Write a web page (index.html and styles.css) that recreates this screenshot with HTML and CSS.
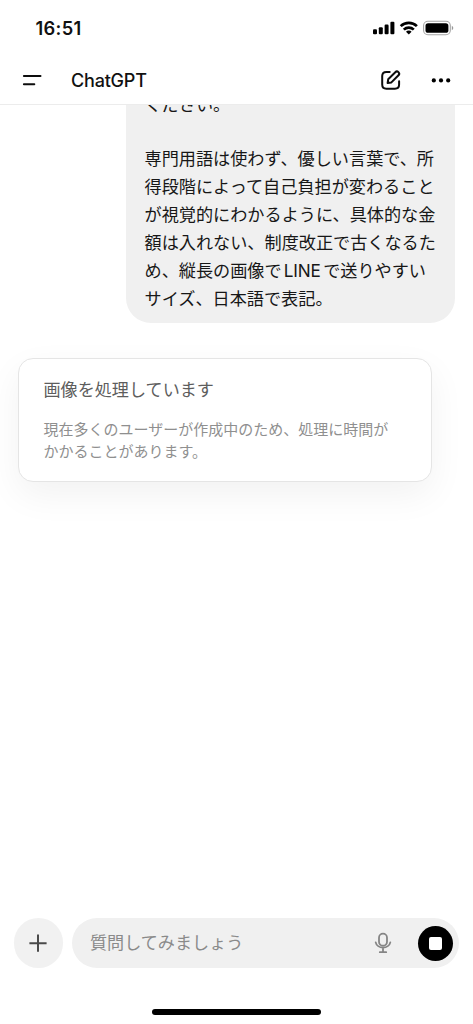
FILE: index.html
```html
<!DOCTYPE html>
<html lang="ja">
<head>
<meta charset="utf-8">
<title>ChatGPT</title>
<link rel="stylesheet" href="styles.css">
</head>
<body>
<div class="app">
  <div class="status">
    <span class="time">16:51</span>
    <svg class="status-icons" width="82" height="16" viewBox="0 0 82 16">
      <rect x="0" y="9.3" width="4" height="5" rx="1.1"/>
      <rect x="5.8" y="7.2" width="4" height="7.1" rx="1.1"/>
      <rect x="11.6" y="4.6" width="4" height="9.7" rx="1.1"/>
      <rect x="17.4" y="1.7" width="4" height="12.6" rx="1.1"/>
      <g fill="none" stroke="#000" stroke-width="2.7">
        <path d="M27.7 6.1a11.6 11.6 0 0 1 16.2 0"/>
        <path d="M30.8 9.6a7.2 7.2 0 0 1 10 0"/>
      </g>
      <path d="M33 11.7a3.9 3.9 0 0 1 5.6 0l-2.8 2.9z"/>
      <rect x="50.6" y="1.3" width="26.7" height="13.4" rx="4.3" fill="none" stroke="#a5a5a5" stroke-width="1.1"/>
      <rect x="52.5" y="3.2" width="22.9" height="9.6" rx="2.6"/>
      <path d="M78.8 5.8c2 .8 2 3.6 0 4.4z" fill="#999"/>
    </svg>
  </div>
  <header class="header">
    <svg class="menu" width="20" height="12" viewBox="0 0 20 12"><path d="M1.9 1.9h16.6M1.9 10.3h10.4"/></svg>
    <h1>ChatGPT</h1>
    <svg class="compose" width="22" height="22" viewBox="0 0 22 22"><path d="M9.7 2.9H6.4Q2.2 2.9 2.2 7.1v8.4Q2.2 19.7 6.4 19.7h8.5Q19.1 19.7 19.1 15.5v-3.3"/><path d="M7.6 14.1l.6-3.8 7.1-7.1a2.2 2.2 0 0 1 3.2 3.1l-7.1 7.1z"/></svg>
    <svg class="more" width="20" height="6" viewBox="0 0 20 6"><circle cx="2.8" cy="3.4" r="2.1"/><circle cx="10" cy="3.4" r="2.1"/><circle cx="17.2" cy="3.4" r="2.1"/></svg>
  </header>
  <main class="chat">
    <div class="bubble">
      <p>ください。</p>
      <p class="request">専門用語は使わず、優しい言葉で、所<br>得段階によって自己負担が変わること<br>が視覚的にわかるように、具体的な金<br>額は入れない、制度改正で古くなるた<br>め、縦長の画像で<span class="latin">LINE</span>で送りやすい<br>サイズ、日本語で表記。</p>
    </div>
    <section class="card">
      <h2>画像を処理しています</h2>
      <p>現在多くのユーザーが作成中のため、処理に時間が<br>かかることがあります。</p>
    </section>
  </main>
  <footer class="composer">
    <div class="add"><svg width="18" height="18" viewBox="0 0 18 18"><path d="M9 .6v17.2M.4 9.2h17.2"/></svg></div>
    <div class="field">
      <span class="placeholder">質問してみましょう</span>
      <svg class="mic" width="18" height="22" viewBox="0 0 18 22"><rect x="5" y="1.7" width="8" height="12" rx="4"/><path d="M1.7 10.3a7.4 6.2 0 0 0 14.6 0M9 16v4M5.8 20.2h6.4"/></svg>
      <div class="stop"><i></i></div>
    </div>
  </footer>
  <div class="home"></div>
</div>
</body>
</html>
```
FILE: styles.css
```css
* { box-sizing: border-box; margin: 0; padding: 0; }
body { background: #fff; color: #171717; font-family: Inter, "Noto Sans CJK JP", sans-serif; }
.app { display: flex; flex-direction: column; width: 473px; height: 1024px; overflow: hidden; }
svg { display: block; flex: none; }

.status { display: flex; align-items: center; justify-content: space-between; height: 56px; padding: 0 18.5px 0 35.5px; }
.time { font-size: 18.3px; font-weight: 600; line-height: 24px; letter-spacing: .3px; color: #111; padding-bottom: 1px; }

.header { display: flex; align-items: center; height: 49px; padding: 0 22px; border-bottom: 1px solid #ececec; }
.menu, .compose { fill: none; stroke: #0d0d0d; stroke-width: 2; stroke-linecap: round; stroke-linejoin: round; }
.header h1 { margin-left: 29px; margin-right: auto; padding-top: 1px; font-size: 18px; font-weight: 500; line-height: 24px; letter-spacing: -.2px; color: #111; }
.more { margin-left: 29px; }

.chat { flex: 1; min-height: 0; overflow: hidden; padding: 0 18.5px 0 18px; }
.bubble { display: flow-root; width: 328.5px; height: 218px; margin-left: auto; padding: 0 18.5px; border-radius: 0 0 25px 25px; background: #f0f0f0; font-size: 17.15px; line-height: 27.9px; white-space: nowrap; }
.bubble p:first-child { margin-top: -14px; }
.request { margin-top: 26.5px; }
.latin { display: inline-block; width: 41.5px; padding-left: 2px; letter-spacing: -.1px; line-height: 20px; }
.card { width: 414px; height: 123.5px; margin-top: 35px; padding: 18px 24.5px; border: 1px solid #e5e5e5; border-radius: 15px; background: #fff; box-shadow: 0 13px 36px rgba(0, 0, 0, .055); }
.card h2 { font-size: 17.1px; font-weight: 400; line-height: 26px; color: #5d5d5d; }
.card p { margin-top: 16px; font-size: 15px; line-height: 22px; color: #8f8f8f; white-space: nowrap; }

.composer { display: flex; align-items: center; gap: 9px; height: 50px; padding: 0 14px 0 13.5px; }
.add { display: flex; align-items: center; justify-content: center; width: 49.5px; height: 49.5px; border-radius: 50%; background: #f1f1f1; }
.add svg { fill: none; stroke: #4a4a4a; stroke-width: 2; }
.field { display: flex; align-items: center; flex: 1; height: 50px; padding: 0 6px 0 18px; border-radius: 25px; background: #f0f0f0; }
.placeholder { margin-right: auto; font-size: 17.1px; line-height: 26px; color: #8a8a8a; }
.mic { margin-right: 26.5px; fill: none; stroke: #858585; stroke-width: 1.8; stroke-linecap: round; }
.stop { display: flex; align-items: center; justify-content: center; width: 35px; height: 35px; border-radius: 50%; background: #000; }
.stop i { width: 13px; height: 13px; border-radius: 2px; background: #fff; }
.home { flex: none; width: 169px; height: 6px; margin: 41px auto 9px; border-radius: 3px; background: #000; }
```
